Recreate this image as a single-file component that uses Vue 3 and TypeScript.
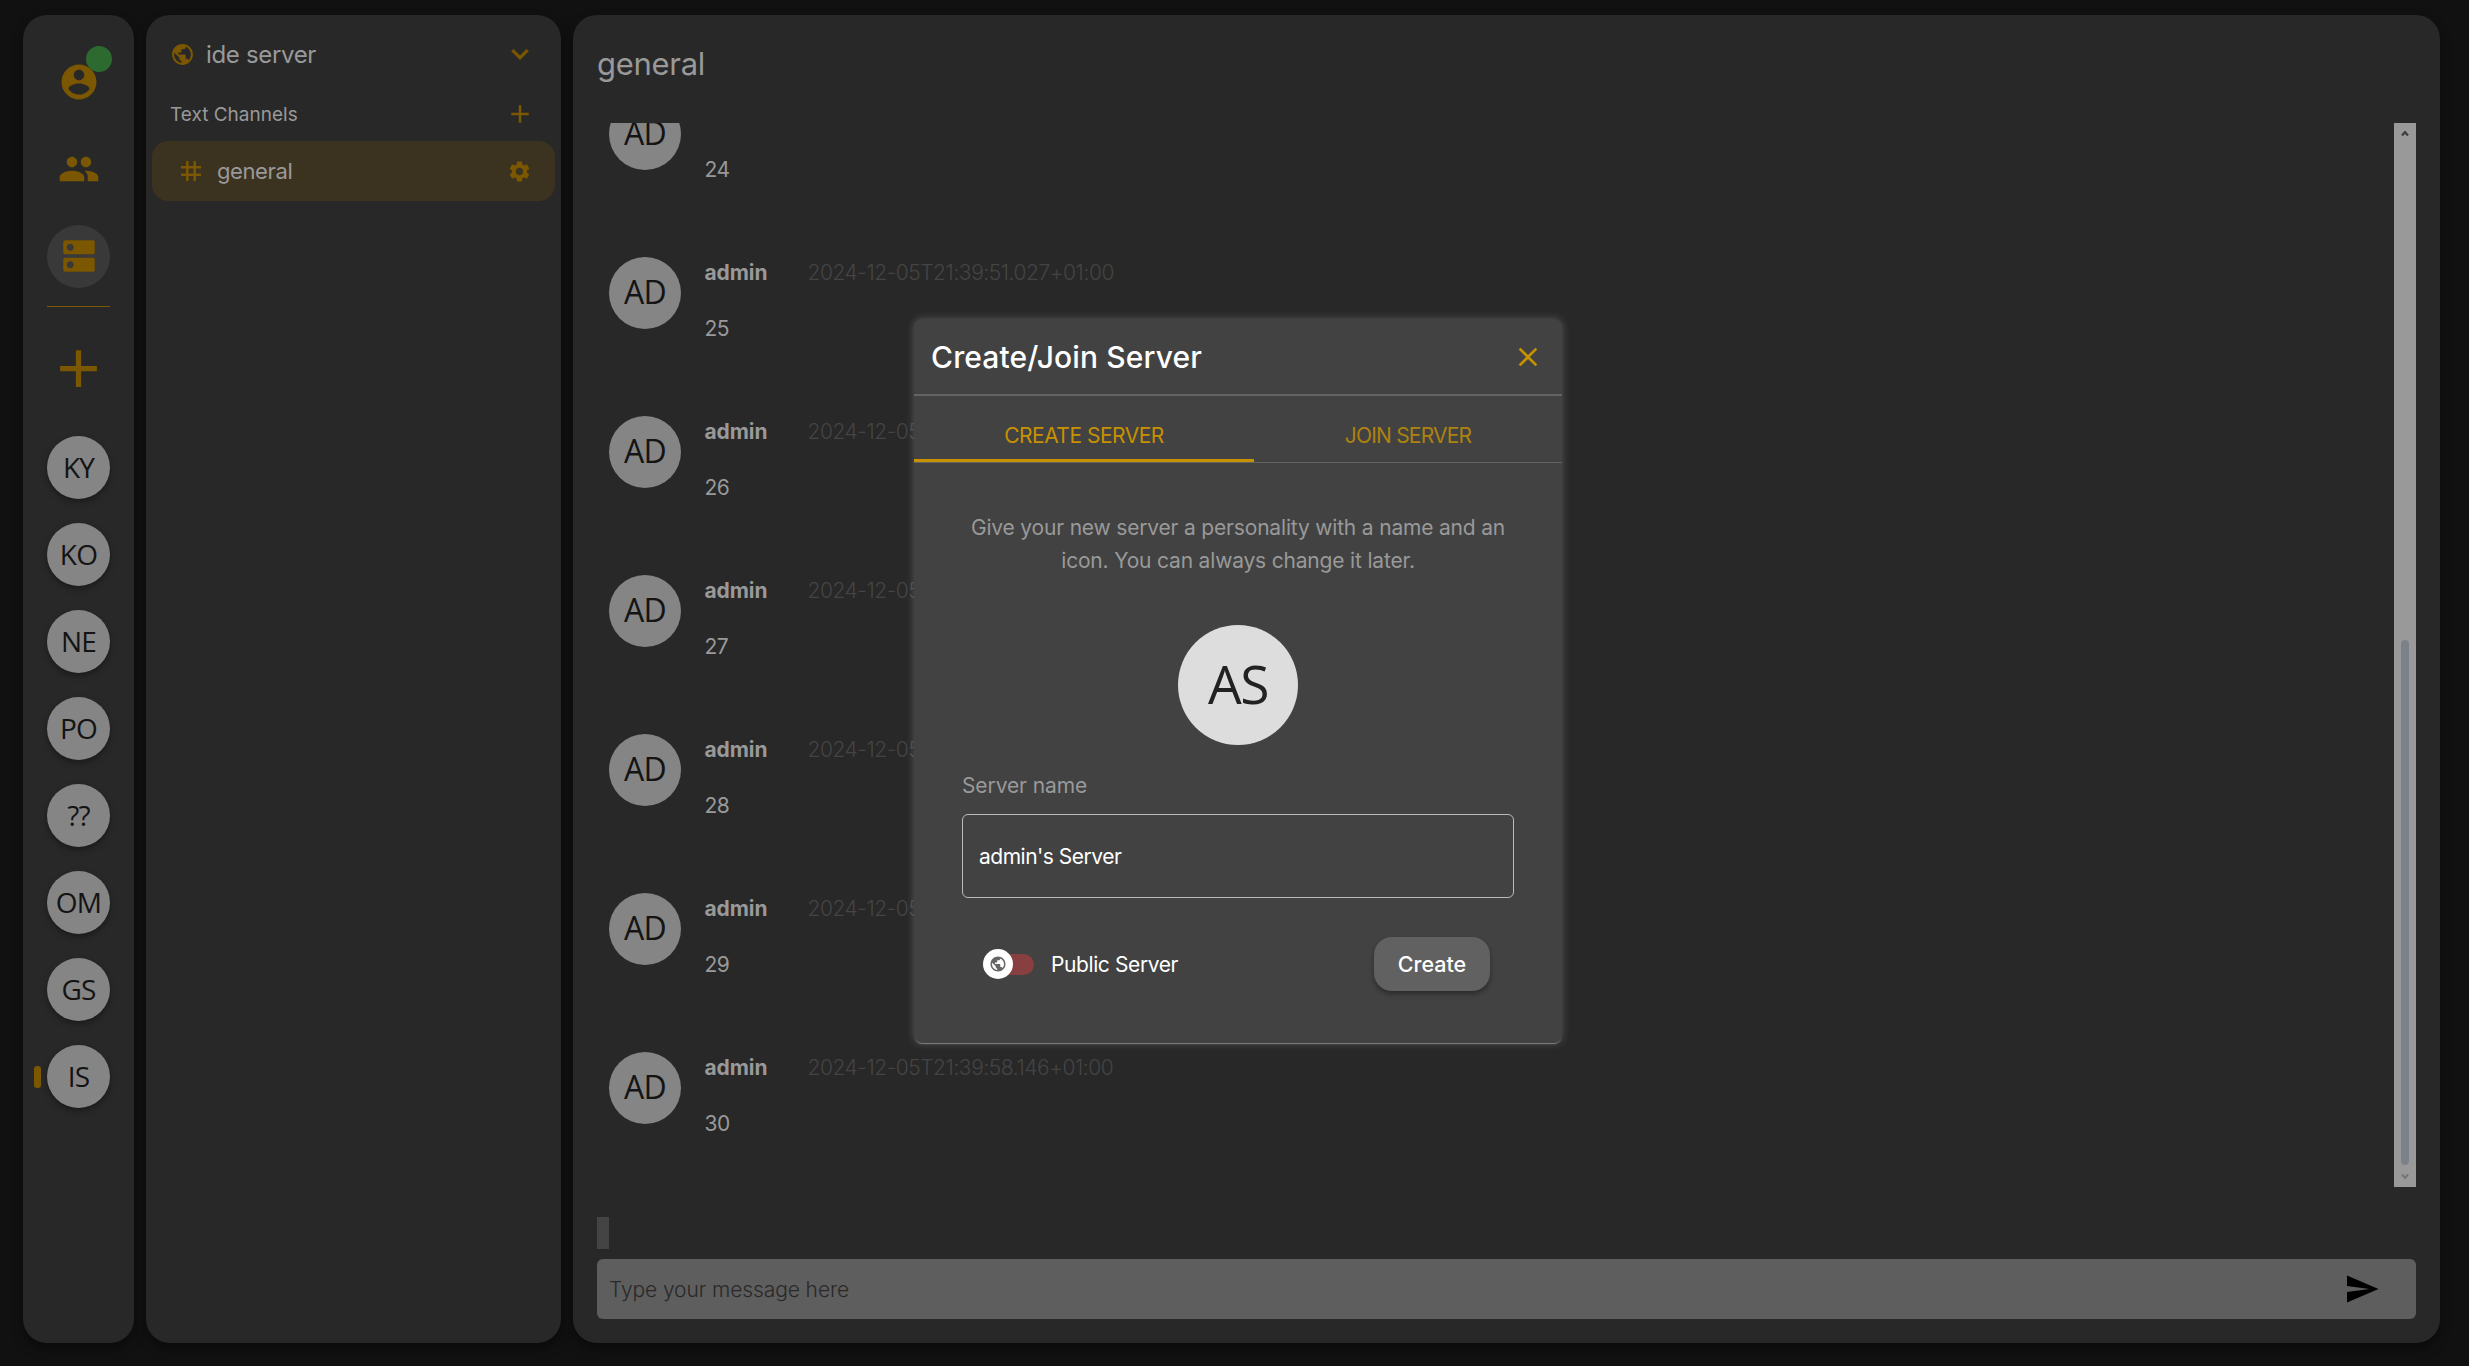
<script setup lang="ts">
interface Message {
  text: string
  author?: string
  time?: string
}

const icons = {
  account:
    'M12 2C6.48 2 2 6.48 2 12s4.48 10 10 10 10-4.48 10-10S17.52 2 12 2zm0 3c1.66 0 3 1.34 3 3s-1.34 3-3 3-3-1.34-3-3 1.34-3 3-3zm0 14.2c-2.5 0-4.71-1.28-6-3.22.03-1.99 4-3.08 6-3.08 1.99 0 5.97 1.09 6 3.08-1.29 1.94-3.5 3.22-6 3.22z',
  people:
    'M16 11c1.66 0 2.99-1.34 2.99-3S17.66 5 16 5c-1.66 0-3 1.34-3 3s1.34 3 3 3zm-8 0c1.66 0 2.99-1.34 2.99-3S9.66 5 8 5C6.34 5 5 6.34 5 8s1.34 3 3 3zm0 2c-2.33 0-7 1.17-7 3.5V19h14v-2.5c0-2.33-4.67-3.5-7-3.5zm8 0c-.29 0-.62.02-.97.05 1.16.84 1.97 1.97 1.97 3.45V19h6v-2.5c0-2.33-4.67-3.5-7-3.5z',
  dns:
    'M20 13H4c-.55 0-1 .45-1 1v6c0 .55.45 1 1 1h16c.55 0 1-.45 1-1v-6c0-.55-.45-1-1-1zM7 19c-1.1 0-2-.9-2-2s.9-2 2-2 2 .9 2 2-.9 2-2 2zM20 3H4c-.55 0-1 .45-1 1v6c0 .55.45 1 1 1h16c.55 0 1-.45 1-1V4c0-.55-.45-1-1-1zM7 9c-1.1 0-2-.9-2-2s.9-2 2-2 2 .9 2 2-.9 2-2 2z',
  add: 'M19 13h-6v6h-2v-6H5v-2h6V5h2v6h6v2z',
  globe:
    'M12 2C6.48 2 2 6.48 2 12s4.48 10 10 10 10-4.48 10-10S17.52 2 12 2zm-1 17.93c-3.95-.49-7-3.85-7-7.93 0-.62.08-1.21.21-1.79L9 15v1c0 1.1.9 2 2 2v1.93zm6.9-2.54c-.26-.81-1-1.39-1.9-1.39h-1v-3c0-.55-.45-1-1-1H8v-2h2c.55 0 1-.45 1-1V7h2c1.1 0 2-.9 2-2v-.41c2.93 1.19 5 4.06 5 7.41 0 2.08-.8 3.97-2.1 5.39z',
  expand: 'M16.59 8.59 12 13.17 7.41 8.59 6 10l6 6 6-6z',
  tag: 'M20 10V8h-4V4h-2v4h-4V4H8v4H4v2h4v4H4v2h4v4h2v-4h4v4h2v-4h4v-2h-4v-4h4zm-6 4h-4v-4h4v4z',
  settings:
    'M19.14 12.94c.04-.3.06-.61.06-.94 0-.32-.02-.64-.07-.94l2.03-1.58c.18-.14.23-.41.12-.61l-1.92-3.32c-.12-.22-.37-.29-.59-.22l-2.39.96c-.5-.38-1.03-.7-1.62-.94l-.36-2.54c-.04-.24-.24-.41-.48-.41h-3.84c-.24 0-.43.17-.47.41l-.36 2.54c-.59.24-1.13.57-1.62.94l-2.39-.96c-.22-.08-.47 0-.59.22L2.74 8.87c-.12.21-.08.47.12.61l2.03 1.58c-.05.3-.09.63-.09.94s.02.64.07.94l-2.03 1.58c-.18.14-.23.41-.12.61l1.92 3.32c.12.22.37.29.59.22l2.39-.96c.5.38 1.03.7 1.62.94l.36 2.54c.05.24.24.41.48.41h3.84c.24 0 .44-.17.47-.41l.36-2.54c.59-.24 1.13-.56 1.62-.94l2.39.96c.22.08.47 0 .59-.22l1.92-3.32c.12-.22.07-.47-.12-.61l-2.01-1.58zM12 15.6c-1.98 0-3.6-1.62-3.6-3.6s1.62-3.6 3.6-3.6 3.6 1.62 3.6 3.6-1.62 3.6-3.6 3.6z',
  send: 'M2.01 21 23 12 2.01 3 2 10l15 2-15 2z',
  close:
    'M19 6.41 17.59 5 12 10.59 6.41 5 5 6.41 10.59 12 5 17.59 6.41 19 12 13.41 17.59 19 19 17.59 13.41 12z',
}

const servers: string[] = ['KY', 'KO', 'NE', 'PO', '??', 'OM', 'GS', 'IS']
const activeServer = 'IS'

const messages: Message[] = [
  { text: '24' },
  { text: '25', author: 'admin', time: '2024-12-05T21:39:51.027+01:00' },
  { text: '26', author: 'admin', time: '2024-12-05T21:39:52.401+01:00' },
  { text: '27', author: 'admin', time: '2024-12-05T21:39:53.780+01:00' },
  { text: '28', author: 'admin', time: '2024-12-05T21:39:55.214+01:00' },
  { text: '29', author: 'admin', time: '2024-12-05T21:39:56.633+01:00' },
  { text: '30', author: 'admin', time: '2024-12-05T21:39:58.146+01:00' },
]
</script>

<template>
  <div class="app">
    <nav class="panel rail">
      <div class="rail-btn">
        <svg class="i42" viewBox="0 0 24 24"><path :d="icons.account" /></svg>
        <span class="status"></span>
      </div>
      <div class="rail-btn">
        <svg class="i42" viewBox="0 0 24 24"><path :d="icons.people" /></svg>
      </div>
      <div class="rail-btn active">
        <svg class="i42" viewBox="0 0 24 24"><path :d="icons.dns" /></svg>
      </div>
      <div class="rail-divider"></div>
      <div class="rail-add">
        <svg class="i63" viewBox="0 0 24 24"><path :d="icons.add" /></svg>
      </div>
      <div v-for="s in servers" :key="s" class="avatar server">
        {{ s }}
        <span v-if="s === activeServer" class="marker"></span>
      </div>
    </nav>

    <aside class="panel channels">
      <header class="server-head">
        <svg class="i25" viewBox="0 0 24 24"><path :d="icons.globe" /></svg>
        <span class="server-name">ide server</span>
        <span class="end"><svg class="i34 chevron" viewBox="0 0 24 24"><path :d="icons.expand" /></svg></span>
      </header>
      <div class="group-head">
        <span class="group-name">Text Channels</span>
        <span class="end"><svg class="i30" viewBox="0 0 24 24"><path :d="icons.add" /></svg></span>
      </div>
      <div class="channel">
        <svg class="i30" viewBox="0 0 24 24"><path :d="icons.tag" /></svg>
        <span class="channel-name">general</span>
        <span class="end"><svg class="i25" viewBox="0 0 24 24"><path :d="icons.settings" /></svg></span>
      </div>
    </aside>

    <main class="panel chat">
      <h1 class="chat-title">general</h1>
      <div class="scroller">
        <div class="messages">
          <div v-for="m in messages" :key="m.text" class="message">
            <div class="avatar user">AD</div>
            <div class="body">
              <div class="meta">
                <span v-if="m.author" class="author">{{ m.author }}</span>
                <span v-if="m.time" class="time">{{ m.time }}</span>
              </div>
              <div class="text">{{ m.text }}</div>
            </div>
          </div>
        </div>
        <div class="scrollbar">
          <svg class="arrow" viewBox="0 0 8 7"><path d="M1 5.6 4 2.2 7 5.6" /></svg>
          <div class="thumb"></div>
          <svg class="arrow dim" viewBox="0 0 8 7"><path d="M1 1.4 4 4.8 7 1.4" /></svg>
        </div>
      </div>
      <div class="typing"></div>
      <div class="composer">
        <span class="placeholder">Type your message here</span>
        <svg class="send" viewBox="0 0 24 24"><path :d="icons.send" /></svg>
      </div>
    </main>

    <section class="modal">
      <header class="modal-head">
        <h2 class="modal-title">Create/Join Server</h2>
        <svg class="close" viewBox="0 0 24 24"><path :d="icons.close" /></svg>
      </header>
      <div class="tabs">
        <div class="tab selected"><span>CREATE SERVER</span></div>
        <div class="tab other"><span>JOIN SERVER</span></div>
      </div>
      <div class="modal-body">
        <p class="intro">
          <span>Give your new server a personality with a name and an</span>
          <span>icon. You can always change it later.</span>
        </p>
        <div class="avatar big">AS</div>
        <div class="label">Server name</div>
        <div class="field"><span>admin's Server</span></div>
        <div class="actions">
          <span class="switch">
            <span class="knob"><svg class="i18" viewBox="0 0 24 24"><path :d="icons.globe" /></svg></span>
          </span>
          <span class="switch-label">Public Server</span>
          <button class="create" type="button">Create</button>
        </div>
      </div>
    </section>
  </div>
</template>

<style>
body {
  margin: 0;
  background: #111;
}
</style>

<style scoped>
.app {
  position: relative;
  box-sizing: border-box;
  width: 2469px;
  height: 1366px;
  padding: 15px 29px 23px 23px;
  display: flex;
  gap: 12px;
  overflow: hidden;
  background: #111;
  color: #999;
  font-family: Inter, 'Liberation Sans', sans-serif;
  font-size: 21px;
}
.app * {
  box-sizing: border-box;
}
span {
  white-space: nowrap;
}
svg {
  display: block;
  flex: none;
  fill: #7a5700;
}
.i18 { width: 18px; height: 18px; }
.i25 { width: 25px; height: 25px; }
.i30 { width: 30px; height: 30px; }
.i34 { width: 34px; height: 34px; }
.i42 { width: 42px; height: 42px; }
.i63 { width: 63px; height: 63px; }

.panel {
  display: flex;
  flex-direction: column;
  flex: none;
  background: #282828;
  border-radius: 24px;
  box-shadow: 0 6px 12px rgba(0, 0, 0, 0.4);
}

/* server rail */
.rail {
  width: 111px;
  align-items: center;
  padding-top: 35px;
}
.rail-btn {
  position: relative;
  width: 63px;
  height: 63px;
  margin-bottom: 24px;
  display: flex;
  align-items: center;
  justify-content: center;
  border-radius: 50%;
}
.rail-btn.active {
  margin: 1px 0 18px;
  background: #393939;
}
.rail-btn.active svg {
  margin-bottom: 2px;
}
.status {
  position: absolute;
  left: 39px;
  top: -4px;
  width: 26px;
  height: 26px;
  border-radius: 50%;
  background: #2d6a30;
}
.rail-divider {
  width: 63px;
  height: 1px;
  margin-bottom: 30px;
  background: #7a5700;
}
.rail-add {
  margin-bottom: 36px;
}
.avatar {
  flex: none;
  display: flex;
  align-items: center;
  justify-content: center;
  border-radius: 50%;
  background: #858585;
  color: #141414;
  font-family: 'Open Sans', 'Noto Sans', sans-serif;
  line-height: 1;
  padding-bottom: 0.06em;
}
.server {
  position: relative;
  width: 63px;
  height: 63px;
  margin-bottom: 24px;
  font-size: 28px;
  letter-spacing: -0.8px;
  box-shadow: 0 3px 6px rgba(0, 0, 0, 0.35);
}
.marker {
  position: absolute;
  left: -13px;
  top: 21px;
  width: 7px;
  height: 22px;
  border-radius: 3px;
  background: #7a5700;
}

/* channel list */
.channels {
  width: 415px;
}
.server-head,
.group-head {
  display: flex;
  align-items: center;
}
.server-head {
  height: 48px;
  margin-top: 15px;
  padding-left: 24px;
}
.server-name {
  margin-left: 11px;
  font-size: 24px;
  letter-spacing: -0.33px;
}
.group-head {
  height: 48px;
  margin-top: 12px;
  padding-left: 24px;
}
.group-name {
  font-size: 19px;
}
.end {
  width: 34px;
  margin-left: auto;
  margin-right: 24.5px;
  display: flex;
  justify-content: center;
}
.chevron {
  stroke: #7a5700;
  stroke-width: 0.4;
}
.channel {
  height: 60px;
  margin: 3px 6px 0;
  padding-left: 24px;
  display: flex;
  align-items: center;
  border-radius: 16px;
  background: #3c3220;
}
.channel-name {
  margin-left: 11px;
  font-size: 22px;
  letter-spacing: -0.4px;
}
.channel .end {
  margin-right: 18.5px;
}

/* chat */
.chat {
  width: 1867px;
  padding: 0 24px;
}
.chat-title {
  margin: 26px 0 0;
  height: 46px;
  line-height: 46px;
  font-size: 31px;
  font-weight: 400;
  letter-spacing: -0.3px;
}
.scroller {
  height: 1064px;
  margin-top: 36px;
  display: flex;
}
.messages {
  flex: 1;
  overflow: hidden;
  display: flex;
  flex-direction: column;
  justify-content: flex-end;
  padding-bottom: 39px;
}
.message {
  flex: none;
  height: 135px;
  margin-top: 24px;
  padding: 0 12px;
  display: flex;
}
.user {
  width: 72px;
  height: 72px;
  margin-top: 39px;
  font-size: 32px;
  letter-spacing: -0.8px;
}
.body {
  margin: 40px 0 0 23.5px;
}
.meta {
  display: flex;
  height: 30px;
  line-height: 30px;
}
.author {
  width: 103px;
  font-weight: 700;
  letter-spacing: -0.1px;
}
.time {
  color: #444;
  font-weight: 300;
  letter-spacing: -0.45px;
}
.text {
  height: 30px;
  line-height: 30px;
  margin-top: 26px;
  letter-spacing: -0.5px;
}
.scrollbar {
  width: 22px;
  display: flex;
  flex-direction: column;
  align-items: center;
  background: #999;
}
.arrow {
  width: 8px;
  height: 7px;
  margin: 7px 0 0;
  fill: none;
  stroke: #3c3c3c;
  stroke-width: 2.2;
}
.thumb {
  width: 8px;
  height: 525px;
  margin-top: 503px;
  border-radius: 4px;
  background: #7d828a;
}
.arrow.dim {
  margin-top: 8px;
  stroke: #777;
}
.typing {
  width: 12px;
  height: 32px;
  margin-top: 30px;
  background: #444;
}
.composer {
  height: 60px;
  margin-top: 10px;
  padding: 0 36px 0 12px;
  display: flex;
  align-items: center;
  justify-content: space-between;
  border-radius: 6px;
  background: #5e5e5e;
}
.placeholder {
  color: #292929;
  font-weight: 300;
  letter-spacing: -0.1px;
}
.send {
  width: 36px;
  height: 36px;
  fill: #000;
}

/* dialog */
.modal {
  position: absolute;
  left: 914px;
  top: 319px;
  width: 648px;
  height: 724px;
  border-radius: 8px;
  background: #424242;
  box-shadow: 0 2px 1px -1px #808080, 0 0 8px rgba(255, 255, 255, 0.22);
}
.modal-head {
  height: 77px;
  padding: 0 18px 0 17px;
  display: flex;
  align-items: center;
  justify-content: space-between;
  border-bottom: 2px solid #636363;
}
.modal-title {
  margin: 1px 0 0;
  font-size: 30px;
  font-weight: 500;
  letter-spacing: 0.13px;
  color: #fff;
}
.close {
  width: 32px;
  height: 32px;
  fill: #c79100;
}
.tabs {
  display: flex;
  height: 67px;
  border-bottom: 1px solid #636363;
}
.tab {
  display: flex;
  align-items: center;
  justify-content: center;
  color: #c79100;
  padding-top: 13px;
}
.selected {
  width: 340px;
  padding-top: 16px;
  border-bottom: 3px solid #c79100;
  letter-spacing: -0.5px;
}
.other {
  width: 308px;
  color: #ad820f;
  letter-spacing: -0.8px;
}
.modal-body {
  display: flex;
  flex-direction: column;
  padding: 48px 48px 0;
}
.intro {
  margin: 0;
  display: flex;
  flex-direction: column;
  align-items: center;
  line-height: 33px;
  letter-spacing: -0.18px;
}
.big {
  width: 120px;
  height: 120px;
  margin: 48px 0 0 216px;
  font-size: 53.3px;
  letter-spacing: -1.5px;
  background: #ddd;
  color: #222;
}
.label {
  height: 30px;
  line-height: 30px;
  margin-top: 26px;
  letter-spacing: -0.1px;
}
.field {
  height: 84px;
  margin-top: 13px;
  padding: 1px 16px 0;
  display: flex;
  align-items: center;
  border: 1px solid #bbb;
  border-radius: 6px;
  color: #fff;
  letter-spacing: -0.5px;
}
.actions {
  display: flex;
  align-items: center;
  margin-top: 39px;
  padding: 0 24px 0 21px;
  color: #fff;
}
.switch {
  width: 51px;
  height: 21px;
  display: flex;
  align-items: center;
  border-radius: 11px;
  background: #873f3f;
}
.knob {
  width: 30px;
  height: 30px;
  flex: none;
  display: flex;
  align-items: center;
  justify-content: center;
  border-radius: 50%;
  background: #fff;
}
.knob svg {
  fill: #666;
}
.switch-label {
  margin-left: 17px;
  letter-spacing: -0.4px;
}
.create {
  width: 116px;
  height: 54px;
  margin-left: auto;
  padding: 0;
  border: 0;
  border-radius: 18px;
  background: #616161;
  color: #fff;
  font: 500 21.5px Inter, sans-serif;
  box-shadow: 0 3px 5px rgba(0, 0, 0, 0.35);
}
</style>
